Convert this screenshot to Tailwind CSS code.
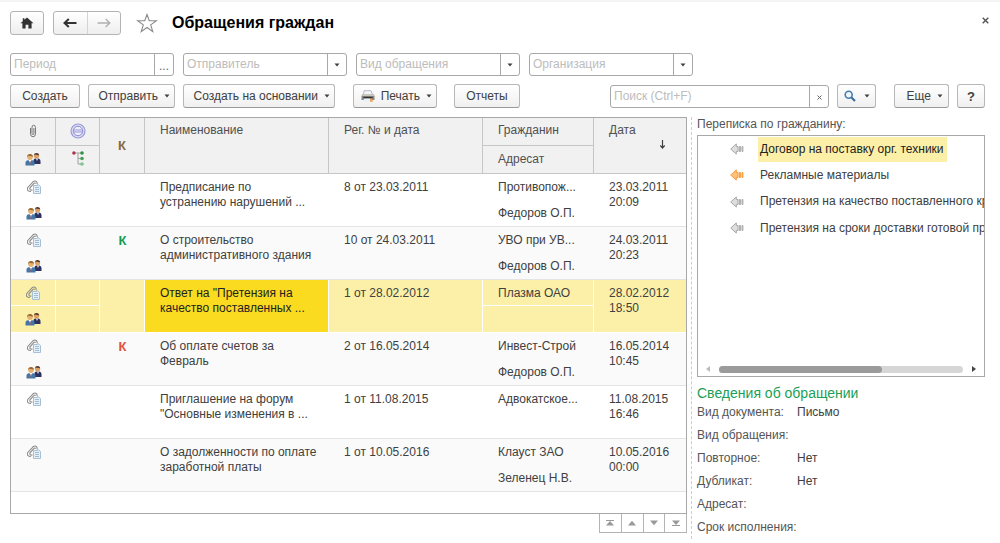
<!DOCTYPE html>
<html lang="ru">
<head>
<meta charset="utf-8">
<title>Обращения граждан</title>
<script src="https://cdn.jsdelivr.net/npm/@tailwindcss/browser@4"></script>
</head>
<body class="bg-white font-['Liberation_Sans',Arial,sans-serif] text-xs leading-[15px] text-[#404040]">
<svg class="hidden" aria-hidden="true">
  <symbol id="person" viewBox="0 0 16 14">
    <path d="M8.500 12V8.500Q8.500 7 10 6.600L13.500 6.500Q15.500 7 15.500 9V12Z" fill="#2c3160"/>
    <path d="M11 6.500L12 9L13 6.500Z" fill="#fff"/>
    <circle cx="11.500" cy="4" r="2.500" fill="#d9a066"/>
    <path d="M8.800 4Q8.700 1 11.500 1Q14.300 1 14.200 4.200L13.400 3Q11 3.200 9.700 2.600Z" fill="#5a3a30"/>
    <path d="M.5 13.500V10.500Q.6 8.800 2.500 8.300L7.500 8.300Q9.500 8.800 9.500 10.500V13.500Z" fill="#4477a8"/>
    <path d="M3.600 8L5 11L6.400 8Z" fill="#fff"/><path d="M5 9V13" stroke="#b55" stroke-width=".8"/>
    <circle cx="5" cy="5.300" r="2.700" fill="#e6b273"/>
    <path d="M2 5.500Q1.800 2 5 2Q8.200 2 8 5.500L7.200 4.200Q4.500 4.400 3 3.800Z" fill="#98692f"/>
  </symbol>
  <symbol id="attach" viewBox="0 0 14 14">
    <path d="M4 11.500Q-.8 11.500 .8 7.500L6 1.800Q8 .2 9.700 1.800L10.300 4M5.500 10Q2.200 10.500 3 7.800L7 3.400Q8 2.600 8.600 3.600" fill="none" stroke="#8c8c8c" stroke-width="1.100"/>
    <path d="M6.500 5.500H10.500V4.500H11L13.500 6.500V13.500H6.500Z" fill="#e4eff8" stroke="#9fb9cf" stroke-width=".9"/>
    <path d="M8 7.500H12M8 9.500H12M8 11.500H12" stroke="#8fb0cc" stroke-width=".8"/>
  </symbol>
  <symbol id="arr" viewBox="0 0 14 12">
    <path d="M.7 6L6.300 .9V3.500H8V8.500H6.300V11.100Z" stroke-width="1"/>
    <path d="M9.300 3.500H10.400V8.500H9.300ZM12 3.500H12.900V8.500H12Z" stroke-width="1"/>
  </symbol>
  <symbol id="down" viewBox="0 0 6 4"><path d="M.5 .5H5.500L3 3.500Z" fill="#404040"/></symbol>
</svg>

<div class="flex flex-col border-t-2 border-[#f4f4f4] pl-[10px] pr-[15px]">
  <header class="flex items-center pt-[9px]">
    <button class="flex h-6 w-[34px] items-center justify-center rounded-[3px] border border-[#b4b4b4] bg-linear-to-b from-white to-[#eeeeee]" aria-label="Домой">
      <svg class="h-3 w-[14px]" viewBox="0 0 14 12"><path d="M7 .5L13.500 6.300H11.600V11.500H8.400V7.800H5.600V11.500H2.400V6.300H.5L2.800 4.200V1.200H4.400V2.800Z" fill="#333"/></svg>
    </button>
    <div class="ml-[9px] flex h-6 w-[68px] rounded-[3px] border border-[#b4b4b4] bg-linear-to-b from-white to-[#eeeeee]">
      <button class="flex flex-1 items-center justify-center border-r border-[#d4d4d4]" aria-label="Назад">
        <svg class="h-[10px] w-[14px]" viewBox="0 0 14 10"><path d="M13.500 5H2.500M5.800 1L1.500 5L5.800 9" fill="none" stroke="#333" stroke-width="2"/></svg>
      </button>
      <button class="flex flex-1 items-center justify-center" aria-label="Вперед">
        <svg class="h-[10px] w-[14px]" viewBox="0 0 14 10"><path d="M.5 5H12.500M8.700 1L12.800 5L8.700 9" fill="none" stroke="#b0b0b0" stroke-width="1.400"/></svg>
      </button>
    </div>
    <button class="ml-[15px]" aria-label="Избранное">
      <svg class="h-5 w-[22px]" viewBox="0 0 22 20"><path d="M11 1.500L13.300 7.800H20.300L14.700 11.900L16.800 18.600L11 14.500L5.200 18.600L7.300 11.900L1.700 7.800H8.700Z" fill="#fff" stroke="#8a8a8a" stroke-width="1.100"/></svg>
    </button>
    <h1 class="ml-[14px] text-base leading-6 font-bold text-black">Обращения граждан</h1>
    <button class="-mr-[6px] ml-auto flex size-3 items-center justify-center self-start mt-[3px]" aria-label="Закрыть"><svg class="size-[7px]" viewBox="0 0 7 7"><path d="M.7 .7L6.300 6.300M6.300 .7L.7 6.300" stroke="#555" stroke-width="1.400"/></svg></button>
  </header>

  <div class="mt-[18px] flex gap-[9px]">
    <div class="flex h-[23px] w-[164px] rounded-[3px] border border-[#a8a8a8]">
      <input class="w-0 flex-1 px-[3px] placeholder:text-[#bcbcbc]" placeholder="Период" aria-label="Период">
      <button class="w-[19px] border-l border-[#a8a8a8] pt-1 text-[#666]" aria-label="Выбрать период">...</button>
    </div>
    <div class="flex h-[23px] w-[164px] rounded-[3px] border border-[#a8a8a8]">
      <input class="w-0 flex-1 px-[3px] placeholder:text-[#bcbcbc]" placeholder="Отправитель" aria-label="Отправитель">
      <button class="flex w-[19px] items-center justify-center border-l border-[#a8a8a8]" aria-label="Список отправителей"><svg class="h-1 w-[6px]"><use href="#down"/></svg></button>
    </div>
    <div class="flex h-[23px] w-[164px] rounded-[3px] border border-[#a8a8a8]">
      <input class="w-0 flex-1 px-[3px] placeholder:text-[#bcbcbc]" placeholder="Вид обращения" aria-label="Вид обращения">
      <button class="flex w-[19px] items-center justify-center border-l border-[#a8a8a8]" aria-label="Список видов"><svg class="h-1 w-[6px]"><use href="#down"/></svg></button>
    </div>
    <div class="flex h-[23px] w-[164px] rounded-[3px] border border-[#a8a8a8]">
      <input class="w-0 flex-1 px-[3px] placeholder:text-[#bcbcbc]" placeholder="Организация" aria-label="Организация">
      <button class="flex w-[19px] items-center justify-center border-l border-[#a8a8a8]" aria-label="Список организаций"><svg class="h-1 w-[6px]"><use href="#down"/></svg></button>
    </div>
  </div>

  <div class="mt-2 flex items-center">
    <button class="h-6 w-[70px] rounded-[3px] border border-[#b8b8b8] border-b-[#999] bg-linear-to-b from-white to-[#f0f0f0]">Создать</button>
    <button class="ml-2 flex h-6 w-[87px] items-center justify-end gap-[6px] rounded-[3px] border border-[#b8b8b8] border-b-[#999] bg-linear-to-b from-white to-[#f0f0f0] pr-1">Отправить<svg class="h-1 w-[6px]"><use href="#down"/></svg></button>
    <button class="ml-2 flex h-6 w-[152px] items-center justify-end gap-[6px] rounded-[3px] border border-[#b8b8b8] border-b-[#999] bg-linear-to-b from-white to-[#f0f0f0] pr-1">Создать на основании<svg class="h-1 w-[6px]"><use href="#down"/></svg></button>
    <button class="ml-[18px] flex h-6 w-[84px] items-center justify-end gap-[6px] rounded-[3px] border border-[#b8b8b8] border-b-[#999] bg-linear-to-b from-white to-[#f0f0f0] pr-1">
      <svg class="h-3 w-[14px]" viewBox="0 0 14 12"><path d="M3 .7H10L11.500 4.500H2.500Z" fill="#f3f5f7" stroke="#9aa4ad" stroke-width=".7"/><path d="M1.500 4H12.500L13.500 6V10H.5V6Z" fill="#8a8580"/><path d="M1.500 4H12.500L13.300 6H.7Z" fill="#c9c5c0"/><path d="M2.500 6.800H11.500V8.500H2.500Z" fill="#333"/><path d="M3 8.500H9V11.700H2Z" fill="#e8f0f8"/><path d="M9 8.500H11L12 11.700H9Z" fill="#e7a35a"/></svg>
      Печать<svg class="h-1 w-[6px]"><use href="#down"/></svg></button>
    <button class="ml-[17px] h-6 w-[66px] rounded-[3px] border border-[#b8b8b8] border-b-[#999] bg-linear-to-b from-white to-[#f0f0f0]">Отчеты</button>
    <div class="ml-auto flex h-[23px] w-[219px] rounded-[3px] border border-[#a8a8a8]">
      <input class="w-0 flex-1 px-[3px] placeholder:text-[#bcbcbc]" placeholder="Поиск (Ctrl+F)" aria-label="Поиск">
      <button class="flex w-[19px] items-center justify-center border-l border-[#a8a8a8]" aria-label="Очистить"><svg class="mt-[2px] size-[5px]" viewBox="0 0 5 5"><path d="M.5 .5L4.500 4.500M4.500 .5L.5 4.500" stroke="#666"/></svg></button>
    </div>
    <button class="ml-2 flex h-6 w-[39px] items-center justify-end gap-2 rounded-[3px] border border-[#b8b8b8] border-b-[#999] bg-linear-to-b from-white to-[#f0f0f0] pr-[5px]" aria-label="Найти">
      <svg class="size-3" viewBox="0 0 12 12"><circle cx="4.700" cy="4.700" r="3.500" fill="#eef5fb" stroke="#4a7bab" stroke-width="1.600"/><path d="M7.500 7.500L11 11" stroke="#3f6f9f" stroke-width="2.200"/></svg><svg class="h-1 w-[6px]"><use href="#down"/></svg></button>
    <button class="ml-[18px] flex h-6 w-[55px] items-center justify-end gap-[6px] rounded-[3px] border border-[#b8b8b8] border-b-[#999] bg-linear-to-b from-white to-[#f0f0f0] pr-[5px]">Еще<svg class="h-1 w-[6px]"><use href="#down"/></svg></button>
    <button class="ml-2 h-6 w-7 rounded-[3px] border border-[#b8b8b8] border-b-[#999] bg-linear-to-b from-white to-[#f0f0f0] text-[13px] font-bold" aria-label="Справка">?</button>
  </div>

  <main class="mt-[9px] flex">
    <section class="min-w-0 flex-1">
      <div class="border border-[#a8a8a8] pb-[21px]">
        <table class="w-full table-fixed border-separate border-spacing-0 text-left [&_td]:align-top [&_th]:align-top [&_th]:border-b [&_th]:border-[#c6c6c6] [&_th]:bg-[#f1f1f1] [&_th]:font-normal [&_th]:text-[#505050] [&_svg]:mx-auto">
          <colgroup><col class="w-[45px]"><col class="w-11"><col class="w-[45px]"><col><col class="w-[154px]"><col class="w-[111px]"><col class="w-[92px]"></colgroup>
          <thead>
            <tr class="h-7">
              <th class="border-r pt-[6px]"><svg class="h-[14px] w-2" viewBox="0 0 8 14" role="img" aria-label="Вложения"><path d="M1.500 4V9.800Q1.600 12.800 4 12.800Q6.400 12.800 6.500 9.800V3.500Q6.400 1.200 4.500 1.200Q3 1.200 3 3.500V9.500Q3.100 10.600 4 10.600Q4.900 10.500 4.900 9.500V4" fill="none" stroke="#777" stroke-width="1"/></svg></th>
              <th class="border-r pt-[5px]"><svg class="size-4" viewBox="0 0 16 16" role="img" aria-label="Печать"><circle cx="8" cy="8" r="7" fill="#dcdcf5" stroke="#9a9ad8" stroke-width="1.200"/><circle cx="8" cy="8" r="4.700" fill="#eeeefb" stroke="#8d8dd0"/><path d="M4 7H12M4 9H12" stroke="#8d8dd0" stroke-width=".9"/></svg></th>
              <th rowspan="2" class="border-r pt-5 text-center text-[13px] !font-bold !text-[#86693a]">К</th>
              <th rowspan="2" class="border-r pt-[5px] pl-[15px]">Наименование</th>
              <th rowspan="2" class="border-r pt-[5px] pl-[15px]">Рег. № и дата</th>
              <th class="border-r pt-[5px] pl-[15px]">Гражданин</th>
              <th rowspan="2" class="pt-[5px] pl-[15px]">Дата
                <svg class="mt-[2px] !mr-5 h-[9px] w-[7px]" viewBox="0 0 7 9"><path d="M3.500 0V8M1.300 5.500L3.500 8L5.700 5.500" fill="none" stroke="#404040" stroke-width="1.200"/></svg></th>
            </tr>
            <tr class="h-7">
              <th class="border-r pt-[6px]"><svg class="h-[14px] w-4"><use href="#person"/></svg></th>
              <th class="border-r pt-[5px]"><svg class="h-[15px] w-3" viewBox="0 0 12 15" role="img" aria-label="Структура"><path d="M3 2H9M6 2V13H9M6 7.500H9" fill="none" stroke="#999" stroke-width=".9"/><circle cx="1.900" cy="2" r="1.700" fill="#a83246"/><circle cx="10" cy="2" r="1.800" fill="#2f9445"/><circle cx="10" cy="7.500" r="1.800" fill="#3f9f55"/><circle cx="10" cy="13" r="1.800" fill="#7cc590"/></svg></th>
              <th class="border-r pt-[6px] pl-[15px]">Адресат</th>
            </tr>
          </thead>
          <tbody class="[&_tr:nth-child(even)_td]:border-b [&_td[rowspan]]:border-b [&_td]:border-[#e4e4e4]">
            <tr class="h-[26px]"><td class="pt-[6px]"><svg class="size-[14px]"><use href="#attach"/></svg></td><td></td><td rowspan="2"></td><td rowspan="2" class="pt-[6px] pl-[15px]">Предписание по<br>устранению нарушений ...</td><td rowspan="2" class="pt-[6px] pl-[15px]">8 от 23.03.2011</td><td class="pt-[6px] pl-[15px]">Противопож...</td><td rowspan="2" class="pt-[6px] pl-[15px]">23.03.2011<br>20:09</td></tr>
            <tr class="h-[27px]"><td class="pt-[6px]"><svg class="h-[14px] w-4"><use href="#person"/></svg></td><td></td><td class="pt-[6px] pl-[15px]">Федоров О.П.</td></tr>

            <tr class="h-[26px] bg-[#fafafa]"><td class="pt-[6px]"><svg class="size-[14px]"><use href="#attach"/></svg></td><td></td><td rowspan="2" class="pt-[6px] text-center text-[13px] font-bold text-[#0f9d58]">К</td><td rowspan="2" class="pt-[6px] pl-[15px]">О строительство<br>административного здания</td><td rowspan="2" class="pt-[6px] pl-[15px]">10 от 24.03.2011</td><td class="pt-[6px] pl-[15px]">УВО при УВ...</td><td rowspan="2" class="pt-[6px] pl-[15px]">24.03.2011<br>20:23</td></tr>
            <tr class="h-[27px] bg-[#fafafa]"><td class="pt-[6px]"><svg class="h-[14px] w-4"><use href="#person"/></svg></td><td></td><td class="pt-[6px] pl-[15px]">Федоров О.П.</td></tr>

            <tr class="h-[26px] bg-[#fcf0a8]"><td class="border-r border-b !border-white pt-[6px]"><svg class="size-[14px]"><use href="#attach"/></svg></td><td class="border-r border-b !border-white"></td><td rowspan="2" class="border-r !border-white"></td><td rowspan="2" class="border-r !border-white bg-[#fadb20] pt-[6px] pl-[15px] text-[#222]">Ответ на "Претензия на<br>качество поставленных ...</td><td rowspan="2" class="border-r !border-white pt-[6px] pl-[15px]">1 от 28.02.2012</td><td class="border-r border-b !border-white pt-[6px] pl-[15px]">Плазма ОАО</td><td rowspan="2" class="!border-white pt-[6px] pl-[15px]">28.02.2012<br>18:50</td></tr>
            <tr class="h-[27px] bg-[#fcf0a8]"><td class="border-r !border-white pt-[6px]"><svg class="h-[14px] w-4"><use href="#person"/></svg></td><td class="border-r !border-white"></td><td class="border-r !border-white"></td></tr>

            <tr class="h-[26px] bg-[#fafafa]"><td class="pt-[6px]"><svg class="size-[14px]"><use href="#attach"/></svg></td><td></td><td rowspan="2" class="pt-[6px] text-center text-[13px] font-bold text-[#e2513f]">К</td><td rowspan="2" class="pt-[6px] pl-[15px]">Об оплате счетов за<br>Февраль</td><td rowspan="2" class="pt-[6px] pl-[15px]">2 от 16.05.2014</td><td class="pt-[6px] pl-[15px]">Инвест-Строй</td><td rowspan="2" class="pt-[6px] pl-[15px]">16.05.2014<br>10:45</td></tr>
            <tr class="h-[27px] bg-[#fafafa]"><td class="pt-[6px]"><svg class="h-[14px] w-4"><use href="#person"/></svg></td><td></td><td class="pt-[6px] pl-[15px]">Федоров О.П.</td></tr>

            <tr class="h-[26px]"><td class="pt-[6px]"><svg class="size-[14px]"><use href="#attach"/></svg></td><td></td><td rowspan="2"></td><td rowspan="2" class="pt-[6px] pl-[15px]">Приглашение на форум<br>"Основные изменения в ...</td><td rowspan="2" class="pt-[6px] pl-[15px]">1 от 11.08.2015</td><td class="pt-[6px] pl-[15px]">Адвокатское...</td><td rowspan="2" class="pt-[6px] pl-[15px]">11.08.2015<br>16:46</td></tr>
            <tr class="h-[27px]"><td></td><td></td><td></td></tr>

            <tr class="h-[26px] bg-[#fafafa]"><td class="pt-[6px]"><svg class="size-[14px]"><use href="#attach"/></svg></td><td></td><td rowspan="2"></td><td rowspan="2" class="pt-[6px] pl-[15px]">О задолженности по оплате<br>заработной платы</td><td rowspan="2" class="pt-[6px] pl-[15px]">1 от 10.05.2016</td><td class="pt-[6px] pl-[15px]">Клауст ЗАО</td><td rowspan="2" class="pt-[6px] pl-[15px]">10.05.2016<br>00:00</td></tr>
            <tr class="h-[27px] bg-[#fafafa]"><td></td><td></td><td class="pt-[6px] pl-[15px]">Зеленец Н.В.</td></tr>
          </tbody>
        </table>
      </div>
      <div class="ml-auto flex h-[19px] w-[88px] divide-x divide-[#b4b4b4] border border-t-0 border-[#b4b4b4]">
        <button class="flex flex-1 items-center justify-center" aria-label="В начало"><svg class="h-[6px] w-2" viewBox="0 0 8 6"><path d="M0 .5H8" stroke="#999"/><path d="M4 1L8 5.500H0Z" fill="#999"/></svg></button>
        <button class="flex flex-1 items-center justify-center" aria-label="Вверх"><svg class="h-[6px] w-2" viewBox="0 0 8 6"><path d="M4 .8L8 5.500H0Z" fill="#999"/></svg></button>
        <button class="flex flex-1 items-center justify-center" aria-label="Вниз"><svg class="h-[6px] w-2" viewBox="0 0 8 6"><path d="M4 5.200L8 .5H0Z" fill="#999"/></svg></button>
        <button class="flex flex-1 items-center justify-center" aria-label="В конец"><svg class="h-[6px] w-2" viewBox="0 0 8 6"><path d="M0 5.500H8" stroke="#999"/><path d="M4 5L8 .5H0Z" fill="#999"/></svg></button>
      </div>
    </section>

    <aside class="ml-1 w-[294px] border-l border-dashed border-[#ccc] pl-[5px]">
      <h2 class="text-[#555]">Переписка по гражданину:</h2>
      <div class="mt-[3px] flex h-[242px] flex-col border border-[#a8a8a8]">
        <ul class="flex-1 overflow-hidden whitespace-nowrap">
          <li class="flex h-[26px] items-center pl-8"><svg class="h-3 w-[14px] shrink-0 fill-[#dedede] stroke-[#a8a8a8]"><use href="#arr"/></svg><a href="#" class="ml-[14px] bg-[#fcf0a8] py-[5px] pr-[3px] pl-[2px] text-[#222]">Договор на поставку орг. техники</a></li>
          <li class="flex h-[26px] items-center pl-8"><svg class="h-3 w-[14px] shrink-0 fill-[#ffc078] stroke-[#f79a3c]"><use href="#arr"/></svg><a href="#" class="ml-4">Рекламные материалы</a></li>
          <li class="flex h-[27px] items-center pl-8"><svg class="h-3 w-[14px] shrink-0 fill-[#dedede] stroke-[#a8a8a8]"><use href="#arr"/></svg><a href="#" class="ml-4">Претензия на качество поставленного крепежа</a></li>
          <li class="flex h-[26px] items-center pl-8"><svg class="h-3 w-[14px] shrink-0 fill-[#dedede] stroke-[#a8a8a8]"><use href="#arr"/></svg><a href="#" class="ml-4">Претензия на сроки доставки готовой продукции</a></li>
        </ul>
        <div class="flex h-[14px] items-center px-2">
          <svg class="h-[6px] w-1" viewBox="0 0 4 6"><path d="M4 0V6L0 3Z" fill="#bbb"/></svg>
          <div class="mx-[9px] h-[7px] flex-1 rounded-full bg-[#d6d6d6]"><div class="h-full w-[67%] rounded-full bg-[#9b9b9b]"></div></div>
          <svg class="h-[6px] w-1" viewBox="0 0 4 6"><path d="M0 0V6L4 3Z" fill="#444"/></svg>
        </div>
      </div>
      <h2 class="mt-[6px] text-sm leading-5 text-[#1ba055]">Сведения об обращении</h2>
      <dl class="-mt-[2px] grid grid-cols-[100px_1fr] leading-[23px] text-[#555] [&_dd]:text-[#404040]">
        <dt>Вид документа:</dt><dd>Письмо</dd>
        <dt>Вид обращения:</dt><dd></dd>
        <dt>Повторное:</dt><dd>Нет</dd>
        <dt>Дубликат:</dt><dd>Нет</dd>
        <dt>Адресат:</dt><dd></dd>
        <dt>Срок исполнения:</dt><dd></dd>
      </dl>
    </aside>
  </main>
</div>
</body>
</html>
